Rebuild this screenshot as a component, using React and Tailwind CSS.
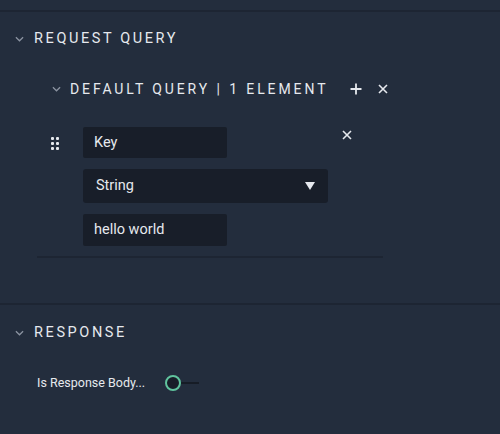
const Chevron = ({ className }) => (
  <svg viewBox="0 0 10 6" className={className} fill="none" stroke="currentColor" strokeWidth="1.4">
    <path d="M1 1l4 4 4-4" />
  </svg>
);

const Cross = ({ className }) => (
  <svg viewBox="0 0 10 10" className={className} fill="none" stroke="currentColor" strokeWidth="1.6">
    <path d="M1 1l8 8M9 1l-8 8" />
  </svg>
);

const App = () => {
  return (
    <div className="w-[500px] h-[434px] bg-[#232d3d] text-[#e6e9ee] overflow-hidden" style={{ fontFamily: 'Roboto, "Liberation Sans", sans-serif' }}>
      <div className="h-[10px]" />
      <div className="h-[2px] bg-[#1d2533]" />

      {/* Request query */}
      <div className="flex items-center h-[50px] pl-[15px] pt-[3px]">
        <Chevron className="w-[9px] h-[6px] text-[#8b93a1]" />
        <span className="ml-[10px] text-[14.5px] tracking-[2.6px] uppercase">Request Query</span>
      </div>

      <div className="flex items-center h-[42px] pl-[52px] pt-[12px]">
        <Chevron className="w-[9px] h-[6px] text-[#8b93a1]" />
        <span className="ml-[9px] text-[14px] tracking-[2.9px] uppercase">Default Query | 1 Element</span>
        <svg viewBox="0 0 12 12" className="ml-[22px] w-[12px] h-[12px]" fill="none" stroke="currentColor" strokeWidth="1.8">
          <path d="M6 0.5v11M0.5 6h11" />
        </svg>
        <Cross className="ml-[16px] w-[10px] h-[10px]" />
      </div>

      <div className="flex pl-[51px] pt-[23px]">
        <div className="grid grid-cols-2 gap-[2px] w-[8px] h-[12px] mt-[10px]">
          {[0, 1, 2, 3, 4, 5].map((i) => (
            <span key={i} className="w-[3px] h-[3px] rounded-[1px] bg-[#e6e9ee]" />
          ))}
        </div>
        <div className="ml-[24px] flex flex-col gap-[11px]">
          <div className="w-[144px] h-[31px] bg-[#181e29] rounded-[2px] flex items-center px-[11px] text-[14.5px]">Key</div>
          <div className="w-[245px] h-[34px] bg-[#181e29] rounded-[3px] flex items-center justify-between pl-[13px] pr-[13px] text-[14.5px]">
            <span>String</span>
            <svg viewBox="0 0 10 8" className="w-[10px] h-[8px]" fill="currentColor">
              <path d="M0 0h10L5 8z" />
            </svg>
          </div>
          <div className="w-[144px] h-[32px] bg-[#181e29] rounded-[2px] flex items-center px-[11px] text-[14.5px]">hello world</div>
        </div>
        <Cross className="ml-[14px] mt-[3px] w-[10px] h-[10px]" />
      </div>

      <div className="ml-[37px] mt-[10px] w-[346px] h-[2px] bg-[#1d2533]" />

      <div className="h-[45px]" />
      <div className="h-[2px] bg-[#1d2533]" />

      {/* Response */}
      <div className="flex items-center h-[50px] pl-[15px] pt-[5px]">
        <Chevron className="w-[9px] h-[6px] text-[#8b93a1]" />
        <span className="ml-[10px] text-[14.5px] tracking-[2.6px] uppercase">Response</span>
      </div>

      <div className="flex items-center pl-[37px] mt-[18px] h-[20px]">
        <span className="w-[113px] text-[12.5px] text-[#e6e9ee] whitespace-nowrap">Is Response Body...</span>
        <div className="relative ml-[15px] w-[36px] h-[16px] flex items-center">
          <span className="absolute left-[8px] right-[2px] h-[2px] bg-[#161c26]" />
          <span className="relative w-[16px] h-[16px] rounded-full border-2 border-[#60c49e] bg-[#181e29]" />
        </div>
      </div>
    </div>
  );
};

export default App;
